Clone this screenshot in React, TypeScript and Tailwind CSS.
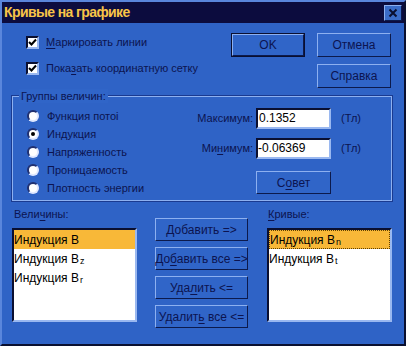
import type { ReactNode } from "react";

const face = "bg-[#3065c8]";
const raised =
  "border border-t-[#8db0f0] border-l-[#8db0f0] border-b-[#0c1a4c] border-r-[#0c1a4c]";
const sunken =
  "border-2 border-t-[#0a0f30] border-l-[#0a0f30] border-b-[#9ab8f0] border-r-[#9ab8f0]";

function U({ children }: { children: ReactNode }) {
  return <span className="underline underline-offset-2">{children}</span>;
}

function Button({
  children,
  className = "",
  def = false,
}: {
  children: ReactNode;
  className?: string;
  def?: boolean;
}) {
  return (
    <div className={`${def ? "border border-[#0a0f30]" : ""} ${className}`}>
      <div
        className={`flex h-full w-full items-center justify-center whitespace-nowrap ${face} ${raised}`}
      >
        <span className="text-[12px] text-[#0c1450]">{children}</span>
      </div>
    </div>
  );
}

function Check({ children }: { children: ReactNode }) {
  return (
    <div className="flex h-[13px] items-center gap-[7px]">
      <div
        className={`flex h-[13px] w-[13px] items-center justify-center bg-white ${sunken}`}
      >
        <svg width="9" height="9" viewBox="0 0 9 9">
          <path d="M1 4 L3.5 6.5 L8 1.5" stroke="#000" strokeWidth="2" fill="none" />
        </svg>
      </div>
      <span className="text-[#0c1450]">{children}</span>
    </div>
  );
}

function Radio({ on = false, children }: { on?: boolean; children: ReactNode }) {
  return (
    <div className="flex h-[18px] items-center gap-[8px]">
      <div className="flex h-[12px] w-[12px] items-center justify-center rounded-full border-2 border-t-[#203070] border-l-[#203070] border-b-[#e0e8ff] border-r-[#e0e8ff] bg-white">
        {on && <div className="h-[4px] w-[4px] rounded-full bg-black" />}
      </div>
      <span className="text-[#0c1450]">{children}</span>
    </div>
  );
}

function B({ sub }: { sub?: string }) {
  return (
    <>
      B
      {sub && <sub className="ml-[1px] text-[9px]">{sub}</sub>}
    </>
  );
}

export default function App() {
  return (
    <div
      className="h-[346px] w-[406px] border-2 border-t-[#5a86dc] border-l-[#5a86dc] border-b-[#0a1030] border-r-[#0a1030] bg-[#2f63c6] text-[#0c1450]"
      style={{ fontFamily: '"Liberation Sans", Arial, sans-serif' }}
    >
      <div className="flex h-[21px] items-center justify-between bg-[#0c0c3e] pl-[2px] pr-[2px]">
        <span
          className="text-[14px] font-bold tracking-[-0.6px] text-[#f8c448]"
          style={{ fontFamily: '"Liberation Sans Narrow", "Liberation Sans", sans-serif' }}
        >
          Кривые на графике
        </span>
        <div
          className={`flex h-[16px] w-[18px] items-center justify-center bg-[#3a6cc8] ${raised}`}
        >
          <svg width="10" height="10" viewBox="0 0 10 10">
            <path d="M1.5 1.5 L8.5 8.5 M8.5 1.5 L1.5 8.5" stroke="#0a0f30" strokeWidth="2" />
          </svg>
        </div>
      </div>

      <div className="px-[10px] pt-[10px] text-[11px]">
        <div className="flex">
          <div className="flex w-[219px] flex-col gap-[13px] pl-[14px] pt-[3px]">
            <Check>
              <U>М</U>аркировать линии
            </Check>
            <Check>
              Пока<U>з</U>ать координатную сетку
            </Check>
          </div>
          <div className="grid grid-cols-[74px_74px] gap-x-[12px] gap-y-[7px]">
            <Button def className="h-[24px]">
              OK
            </Button>
            <Button className="h-[24px]">Отмена</Button>
            <div />
            <Button className="h-[24px]">Справка</Button>
          </div>
        </div>

        <div className="relative mt-[8px] h-[105px] w-[380px] border border-[#8db0f0] outline outline-1 outline-[#1a3a90]">
          <span className={`absolute left-[6px] top-[-8px] ${face} px-[2px] leading-[14px] text-[#0c1450]`}>
            Группы величин:
          </span>
          <div className="flex">
            <div className="flex w-[170px] flex-col pl-[14px] pt-[10px]">
              <Radio>Функция потоі</Radio>
              <Radio on>Индукция</Radio>
              <Radio>Напряженность</Radio>
              <Radio>Проницаемость</Radio>
              <Radio>Плотность энергии</Radio>
            </div>
            <div className="flex flex-col gap-[9px] pt-[11px]">
              <div className="flex items-center">
                <span className="w-[70px] text-right text-[#0c1450]">Максимум:</span>
                <div
                  className={`ml-[3px] h-[21px] w-[75px] bg-white ${sunken} px-[1px] text-[12px] leading-[17px] text-black`}
                >
                  0.1352
                </div>
                <span className="ml-[10px] text-[#0c1450]">(Тл)</span>
              </div>
              <div className="flex items-center">
                <span className="w-[70px] text-right text-[#0c1450]">
                  Ми<U>н</U>имум:
                </span>
                <div
                  className={`ml-[3px] h-[21px] w-[75px] bg-white ${sunken} text-[12px] leading-[17px] text-black`}
                >
                  -0.06369
                </div>
                <span className="ml-[10px] text-[#0c1450]">(Тл)</span>
              </div>
              <Button className="ml-[73px] mt-[3px] h-[23px] w-[75px]">
                С<U>о</U>вет
              </Button>
            </div>
          </div>
        </div>

        <div className="mt-[3px] flex">
          <div className="w-[125px]">
            <div className="h-[20px] pl-[2px] leading-[20px] text-[#0c1450]">
              Вели<U>ч</U>ины:
            </div>
            <div className={`mt-[4px] h-[94px] bg-white ${sunken} text-[12px] text-black`}>
              <div className="flex h-[19px] items-center bg-[#f8b838]">Индукция B</div>
              <div className="flex h-[19px] items-center">
                Индукция <B sub="z" />
              </div>
              <div className="flex h-[19px] items-center">
                Индукция <B sub="r" />
              </div>
            </div>
          </div>

          <div className="ml-[18px] mt-[14px] flex w-[93px] flex-col gap-[6px]">
            <Button className="h-[23px]">
              <U>Д</U>обавить =&gt;
            </Button>
            <Button className="h-[23px]">
              До<U>б</U>авить все =&gt;
            </Button>
            <Button className="h-[23px]">
              Уда<U>л</U>ить &lt;=
            </Button>
            <Button className="h-[23px]">
              Удалит<U>ь</U> все &lt;=
            </Button>
          </div>

          <div className="ml-[19px] w-[125px]">
            <div className="h-[20px] pl-[1px] leading-[20px] text-[#0c1450]">
              <U>К</U>ривые:
            </div>
            <div className={`mt-[4px] h-[94px] bg-white ${sunken} text-[12px] text-black`}>
              <div className="flex h-[19px] items-center border border-dotted border-[#604000] bg-[#f8b838]">
                Индукция <B sub="n" />
              </div>
              <div className="flex h-[19px] items-center">
                Индукция <B sub="t" />
              </div>
            </div>
          </div>
        </div>
      </div>
    </div>
  );
}
